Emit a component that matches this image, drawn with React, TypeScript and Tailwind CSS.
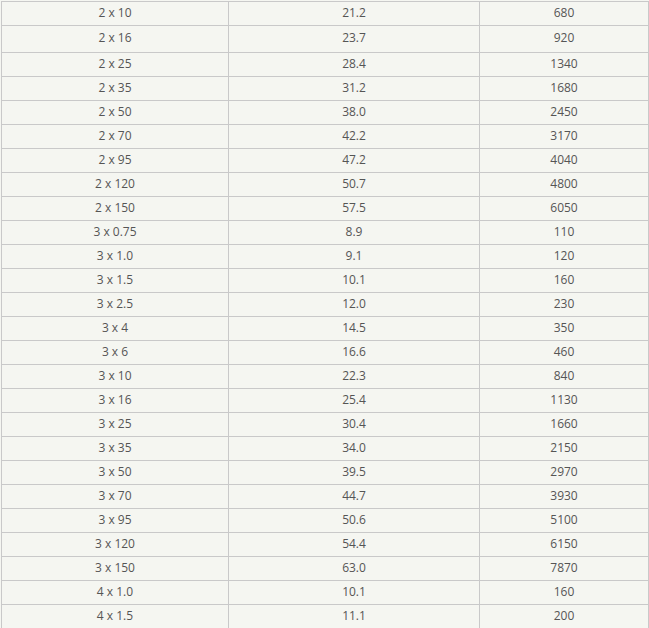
const rows: [string, string, string][] = [
  ["2 x 10", "21.2", "680"],
  ["2 x 16", "23.7", "920"],
  ["2 x 25", "28.4", "1340"],
  ["2 x 35", "31.2", "1680"],
  ["2 x 50", "38.0", "2450"],
  ["2 x 70", "42.2", "3170"],
  ["2 x 95", "47.2", "4040"],
  ["2 x 120", "50.7", "4800"],
  ["2 x 150", "57.5", "6050"],
  ["3 x 0.75", "8.9", "110"],
  ["3 x 1.0", "9.1", "120"],
  ["3 x 1.5", "10.1", "160"],
  ["3 x 2.5", "12.0", "230"],
  ["3 x 4", "14.5", "350"],
  ["3 x 6", "16.6", "460"],
  ["3 x 10", "22.3", "840"],
  ["3 x 16", "25.4", "1130"],
  ["3 x 25", "30.4", "1660"],
  ["3 x 35", "34.0", "2150"],
  ["3 x 50", "39.5", "2970"],
  ["3 x 70", "44.7", "3930"],
  ["3 x 95", "50.6", "5100"],
  ["3 x 120", "54.4", "6150"],
  ["3 x 150", "63.0", "7870"],
  ["4 x 1.0", "10.1", "160"],
  ["4 x 1.5", "11.1", "200"],
];

export default function App() {
  return (
    <div className="min-h-screen bg-[#f5f6f1] pt-[1px] pl-[1px] font-['Open_Sans',sans-serif] text-[12px] text-[#555]">
      <div className="w-[648px] border-l border-t border-[#c9c9c9]">
        {rows.map((r, i) => (
          <div key={i} className={`flex ${i === 1 ? "h-[27px]" : "h-[24px]"}`}>
            <div className="w-[227px] flex items-center justify-center pb-[2px] border-r border-b border-[#c9c9c9]">{r[0]}</div>
            <div className="w-[251px] flex items-center justify-center pb-[2px] border-r border-b border-[#c9c9c9]">{r[1]}</div>
            <div className="w-[169px] flex items-center justify-center pb-[2px] border-r border-b border-[#c9c9c9]">{r[2]}</div>
          </div>
        ))}
      </div>
    </div>
  );
}
